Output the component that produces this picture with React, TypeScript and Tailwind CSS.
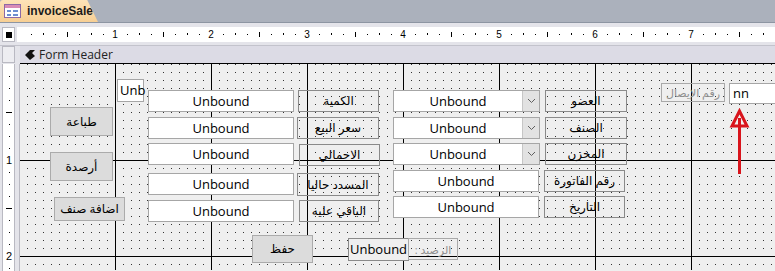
import type { ReactNode } from "react";

const inches = [1, 2, 3, 4, 5, 6, 7];

function HRuler() {
  const ticks = Array.from({ length: 63 }, (_, i) => i);
  return (
    <svg width="758" height="15" className="block">
      {ticks.map((i) => {
        const x = 2 + i * 12;
        if (i === 0) return null;
        if (i % 8 === 0)
          return (
            <text key={i} x={x} y="11" fontSize="10" textAnchor="middle" fontFamily="Liberation Sans, sans-serif" fill="#000">
              {i / 8}
            </text>
          );
        if (i % 4 === 0) return <rect key={i} x={x} y="5" width="1" height="5" fill="#000" />;
        if (i % 2 === 0) return <rect key={i} x={x} y="6" width="1" height="2" fill="#000" />;
        return <rect key={i} x={x} y="7" width="1" height="1" fill="#000" />;
      })}
    </svg>
  );
}

function VRuler() {
  const ticks = Array.from({ length: 18 }, (_, i) => i);
  return (
    <svg width="13" height="206" className="block">
      {ticks.map((i) => {
        const y = i * 12;
        if (i === 0) return null;
        if (i % 8 === 0)
          return (
            <text key={i} x="6" y={y + 4} fontSize="11" textAnchor="middle" fontFamily="Liberation Sans, sans-serif" fill="#000">
              {i / 8}
            </text>
          );
        if (i % 4 === 0) return <rect key={i} x="3" y={y} width="6" height="1" fill="#000" />;
        return <rect key={i} x="6" y={y} width="1" height="1" fill="#000" />;
      })}
    </svg>
  );
}

function Field({ className, children }: { className: string; children?: ReactNode }) {
  return (
    <div className={`absolute flex items-center justify-center bg-white border border-[#a6a6a6] text-[13px] leading-none text-black ${className}`}>
      {children ?? "Unbound"}
    </div>
  );
}

function Combo({ className }: { className: string }) {
  return (
    <div className={`absolute flex bg-white border border-[#a6a6a6] ${className}`}>
      <div className="flex-1 flex items-center justify-center text-[13px] leading-none text-black">Unbound</div>
      <div className="w-[17px] bg-[#e2e2e2] border-l border-[#c6c6c6] flex items-center justify-center">
        <svg width="9" height="6" viewBox="0 0 9 6">
          <path d="M1 1 L4.5 4.5 L8 1" stroke="#606060" strokeWidth="1" fill="none" />
        </svg>
      </div>
    </div>
  );
}

function Label({ className, children, muted }: { className: string; children: ReactNode; muted?: boolean }) {
  return (
    <div
      dir="rtl"
      className={`absolute flex items-center justify-center border leading-none whitespace-nowrap ${
        muted ? "border-[#a9a9a9] text-[#8e8e8e] text-[11px]" : "border-[#8a8a8a] text-black text-[12px]"
      } ${className}`}
    >
      {children}
    </div>
  );
}

function Btn({ className, children }: { className: string; children: ReactNode }) {
  return (
    <div dir="rtl" className={`absolute flex items-center justify-center bg-[#dcdcdc] border border-[#ababab] text-[12px] leading-none text-black ${className}`}>
      {children}
    </div>
  );
}

export default function App() {
  return (
    <div className="w-[775px] h-[271px] overflow-hidden flex flex-col bg-[#abb1bc] font-['Open_Sans','DejaVu_Sans',sans-serif]">
      {/* tab strip */}
      <div className="h-[23px] flex items-end border-b border-[#8d95a2]">
        <div className="h-[22px] w-[98px] flex items-center gap-[6px] pl-[4px] rounded-tl-[3px] bg-gradient-to-b from-[#fde3b8] to-[#f7cf94] [clip-path:polygon(0_0,89%_0,100%_100%,0_100%)]">
          <svg width="17" height="14" viewBox="0 0 17 14">
            <rect x="0.5" y="0.5" width="16" height="13" fill="#fff" stroke="#8d6aa6" />
            <rect x="1" y="1" width="15" height="3" fill="#d98bb6" />
            <rect x="3" y="6" width="4" height="2" fill="#6d8fd0" />
            <rect x="9" y="6" width="5" height="2" fill="#6d8fd0" />
            <rect x="3" y="10" width="4" height="2" fill="#6d8fd0" />
            <rect x="9" y="10" width="5" height="2" fill="#6d8fd0" />
          </svg>
          <span className="text-[12px] font-bold text-[#1b1b1b] font-['Liberation_Sans',sans-serif]">invoiceSale</span>
        </div>
      </div>

      {/* ruler row */}
      <div className="h-[23px] flex items-start pt-[4px] bg-[#e4e4ea] border-b border-[#c3c3cc]">
        <div className="ml-[2px] w-[13px] h-[15px] bg-white border border-[#b9b9c2] flex items-center justify-center">
          <div className="w-[6px] h-[6px] bg-black" />
        </div>
        <div className="ml-[2px] h-[15px] bg-white flex-1">
          <HRuler />
        </div>
      </div>

      {/* header row */}
      <div className="h-[18px] flex bg-[#e4e4ea]">
        <div className="ml-[2px] w-[13px] h-[17px] bg-[#ededf1] border border-[#b9b9c2]" />
        <div className="ml-[5px] flex-1 flex items-center gap-[4px] pl-[5px] bg-[#dcdbe5] border-b border-black">
          <svg width="10" height="10" viewBox="0 0 10 10">
            <polygon points="0,5 5,0 10,0 7,3 10,6 5,10" fill="#111" />
          </svg>
          <span className="text-[12px] text-[#222]">Form Header</span>
        </div>
      </div>

      {/* body */}
      <div className="flex-1 flex bg-[#e4e4ea]">
        <div className="ml-[2px] w-[13px] bg-white border-x border-[#b9b9c2]">
          <VRuler />
        </div>
        <div className="ml-[4px] w-[1px] bg-[#b9b9c2]" />
        <div className="relative flex-1 bg-[#efefef] overflow-hidden">
          <svg className="absolute inset-0" width="755" height="206">
            <defs>
              <pattern id="dots" width="8" height="8" patternUnits="userSpaceOnUse" x="7" y="0">
                <rect x="0" y="0" width="1" height="1" fill="#333" />
              </pattern>
            </defs>
            <rect width="755" height="206" fill="url(#dots)" />
            {inches.map((k) => (
              <rect key={k} x={96 * k - 1} y="0" width="1" height="206" fill="#000" />
            ))}
            <rect x="0" y="96" width="755" height="1" fill="#000" />
            <rect x="0" y="192" width="755" height="1" fill="#000" />
          </svg>

          <Btn className="left-[30px] top-[43px] w-[63px] h-[29px]">طباعة</Btn>
          <Btn className="left-[30px] top-[88px] w-[63px] h-[29px]">أرصدة</Btn>
          <Btn className="left-[34px] top-[133px] w-[71px] h-[24px]">اضافة صنف</Btn>
          <Btn className="left-[232px] top-[171px] w-[61px] h-[28px]">حفظ</Btn>

          <Field className="left-[97px] top-[15px] w-[27px] h-[23px] !justify-start pl-[2px]">Unb</Field>

          <Field className="left-[128px] top-[26px] w-[146px] h-[22px]" />
          <Field className="left-[128px] top-[53px] w-[146px] h-[22px]" />
          <Field className="left-[128px] top-[79px] w-[146px] h-[22px]" />
          <Field className="left-[128px] top-[109px] w-[146px] h-[22px]" />
          <Field className="left-[128px] top-[136px] w-[146px] h-[22px]" />

          <Label className="left-[278px] top-[26px] w-[81px] h-[22px]">الكمية</Label>
          <Label className="left-[277px] top-[53px] w-[82px] h-[22px]">سعر البيع</Label>
          <Label className="left-[279px] top-[80px] w-[81px] h-[22px]">الاجمالي</Label>
          <Label className="left-[277px] top-[109px] w-[82px] h-[23px]">المسدد حاليا</Label>
          <Label className="left-[279px] top-[136px] w-[80px] h-[22px]">الباقي عليه</Label>

          <Combo className="left-[373px] top-[26px] w-[147px] h-[22px]" />
          <Combo className="left-[373px] top-[53px] w-[147px] h-[22px]" />
          <Combo className="left-[373px] top-[79px] w-[147px] h-[22px]" />
          <Field className="left-[373px] top-[106px] w-[146px] h-[22px]" />
          <Field className="left-[373px] top-[132px] w-[146px] h-[22px]" />

          <Label className="left-[525px] top-[26px] w-[82px] h-[22px]">العضو</Label>
          <Label className="left-[525px] top-[53px] w-[82px] h-[22px]">الصنف</Label>
          <Label className="left-[525px] top-[79px] w-[82px] h-[22px]">المخزن</Label>
          <Label className="left-[524px] top-[106px] w-[81px] h-[22px]">رقم الفاتورة</Label>
          <Label className="left-[524px] top-[132px] w-[81px] h-[22px]">التاريخ</Label>

          <Label muted className="left-[641px] top-[19px] w-[64px] h-[19px]">رقم الإيصال</Label>
          <Field className="left-[709px] top-[19px] w-[60px] h-[21px] !justify-start pl-[3px]">nn</Field>

          <Field className="left-[328px] top-[174px] w-[61px] h-[23px] !bg-[#efefef] !border-[#8a8a8a]">Unbound</Field>
          <Label muted className="left-[388px] top-[174px] w-[50px] h-[22px]">الرصيد :</Label>

          <svg className="absolute left-[709px] top-[44px]" width="22" height="68" viewBox="0 0 22 68">
            <polygon points="10.5,3 3,18 18,18" fill="none" stroke="#d9141c" strokeWidth="3" strokeLinejoin="miter" />
            <rect x="9" y="10" width="3" height="56" fill="#d9141c" />
          </svg>
        </div>
      </div>
    </div>
  );
}
